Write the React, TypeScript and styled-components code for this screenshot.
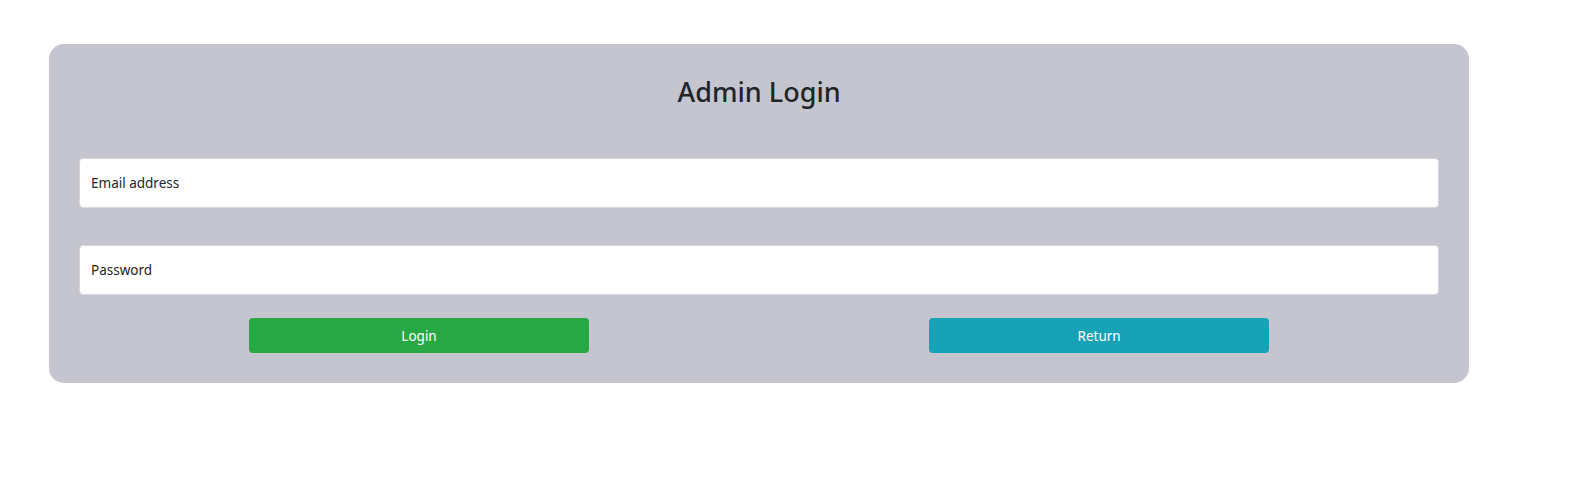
import styled, { createGlobalStyle } from 'styled-components'

const GlobalStyle = createGlobalStyle`
  html, body {
    margin: 0;
    padding: 0;
    background: #fff;
    font-family: 'Noto Sans', 'Open Sans', sans-serif;
    color: #212529;
  }
  * {
    box-sizing: border-box;
  }
`

const Page = styled.div`
  padding: 44px 0 0 49px;
  min-height: 495px;
`

const Card = styled.form`
  width: 90vw;
  background: #c5c5cf;
  border-radius: 15px;
  padding: 32px 30px 30px 30px;
  display: flex;
  flex-direction: column;
`

const Title = styled.h3`
  margin: 0 0 50px 0;
  font-size: 27px;
  line-height: 1.2;
  font-weight: 500;
  text-align: center;
  color: #212529;
`

const Field = styled.input<{ $gap?: number }>`
  display: block;
  width: 100%;
  height: 50px;
  padding: 0 11px;
  margin-bottom: ${({ $gap }) => $gap ?? 0}px;
  background: #fff;
  border: 1px solid #d6d6dc;
  border-radius: 4px;
  font-family: inherit;
  font-size: 13.5px;
  color: #212529;
  outline: none;
  &::placeholder {
    color: #212529;
    opacity: 1;
  }
`

const Actions = styled.div`
  display: grid;
  grid-template-columns: 1fr 1fr;
  justify-items: center;
`

const Button = styled.button<{ $variant: 'success' | 'info' }>`
  width: 50%;
  height: 35px;
  border: none;
  border-radius: 4px;
  background: ${({ $variant }) => ($variant === 'success' ? '#28a745' : '#17a2b8')};
  color: #fff;
  font-family: inherit;
  font-size: 13.5px;
  cursor: pointer;
`

export default function App() {
  return (
    <>
      <GlobalStyle />
      <Page>
        <Card onSubmit={e => e.preventDefault()}>
          <Title>Admin Login</Title>
          <Field type="email" placeholder="Email address" $gap={37} />
          <Field type="password" placeholder="Password" $gap={23} />
          <Actions>
            <Button type="submit" $variant="success">Login</Button>
            <Button type="button" $variant="info">Return</Button>
          </Actions>
        </Card>
      </Page>
    </>
  )
}
